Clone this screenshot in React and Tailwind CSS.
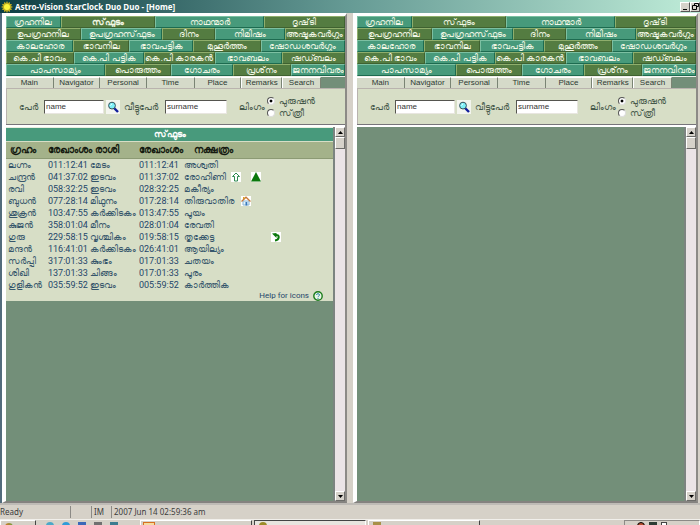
import { useState } from 'react';
import { clsx } from 'clsx';

const tabRows = [
    [['ഗ്രഹനില', 54], ['സ്‌ഫുടം', 95], ['നാഥന്മാർ', 109], ['ദൃഷ്‌ടി', 81]],
    [['ഉപഗ്രഹനില', 75], ['ഉപഗ്രഹസ്‌ഫുടം', 82], ['ദിനം', 52], ['നിമിഷം', 70], ['അഷ്ടകവർഗ്ഗം', 60]],
    [['കാലഹോര', 67], ['ഭാവനില', 56], ['ഭാവപട്ടിക', 64], ['മുഹൂർത്തം', 67], ['ഷോഡശവർഗ്ഗം', 85]],
    [['കെ.പി ഭാവം', 68], ['കെ.പി പട്ടിക', 70], ['കെ.പി കാരകൻ', 71], ['ഭാവബലം', 67], ['ഷഡ്ബലം', 63]],
    [['പാപസാമ്യം', 100], ['പൊരുത്തം', 66], ['ഗോചരം', 62], ['പ്രശ്‌നം', 57], ['ജനനവിവരം', 54]],
];

// rows start on teal or on olive and then alternate
const oliveFirst = [false, true, false, true, false];

const sections = [['Main', 48], ['Navigator', 47], ['Personal', 47], ['Time', 48], ['Place', 47], ['Remarks', 40], ['Search', 38]];

const planets = [
    { name: 'ലഗ്നം', lon: '011:12:41', rasi: 'മേടം', pos: '011:12:41', star: 'അശ്വതി' },
    { name: 'ചന്ദ്രൻ', lon: '041:37:02', rasi: 'ഇടവം', pos: '011:37:02', star: 'രോഹിണി', icons: ['up', null, 'triangle'] },
    { name: 'രവി', lon: '058:32:25', rasi: 'ഇടവം', pos: '028:32:25', star: 'മകീര്യം' },
    { name: 'ബുധൻ', lon: '077:28:14', rasi: 'മിഥുനം', pos: '017:28:14', star: 'തിരുവാതിര', icons: [null, 'house'] },
    { name: 'ശുക്രൻ', lon: '103:47:55', rasi: 'കർക്കിടകം', pos: '013:47:55', star: 'പൂയം' },
    { name: 'കുജൻ', lon: '358:01:04', rasi: 'മീനം', pos: '028:01:04', star: 'രേവതി' },
    { name: 'ഗുരു', lon: '229:58:15', rasi: 'വൃശ്ചികം', pos: '019:58:15', star: 'തൃക്കേട്ട', icons: [null, null, null, null, 'retro'] },
    { name: 'മന്ദൻ', lon: '116:41:01', rasi: 'കർക്കിടകം', pos: '026:41:01', star: 'ആയില്യം' },
    { name: 'സർപ്പി', lon: '317:01:33', rasi: 'കുംഭം', pos: '017:01:33', star: 'ചതയം' },
    { name: 'ശിഖി', lon: '137:01:33', rasi: 'ചിങ്ങം', pos: '017:01:33', star: 'പൂരം' },
    { name: 'ഗുളികൻ', lon: '035:59:52', rasi: 'ഇടവം', pos: '005:59:52', star: 'കാർത്തിക' },
];

const Sun = () => (
    <svg viewBox="0 0 12 12" className="size-3 shrink-0">
        <path d="M6 0l1 2 2-1v2l2 0-1 2 2 1-2 1 1 2H9v2L7 10l-1 2-1-2-2 1V9H1l1-2-2-1 2-1-1-2h2V1l2 1z" fill="#b8a820" />
        <circle cx="6" cy="6" r="3" fill="#fbf43c" />
    </svg>
);

const Magnifier = () => (
    <svg viewBox="0 0 12 12" className="size-3">
        <path d="M7 7l4 4" stroke="#101c9c" strokeWidth="2.4" />
        <circle cx="5" cy="4.6" r="3.4" fill="#7ff0f8" stroke="#35505c" />
        <path d="M3.4 4.4l1.6-1.6" stroke="#fff" />
    </svg>
);

const PlanetIcon = ({ kind }) => (
    <svg viewBox="0 0 10 10" className="size-[10px] bg-white">
        {kind === 'up' && <path d="M5 1L8.500 4.500H6.500V9H3.500V4.500H1.500z" fill="#fff" stroke="#2f8a50" />}
        {kind === 'triangle' && <path d="M5 0L10 9.500H0z" fill="#0b780b" />}
        {kind === 'house' && (
            <>
                <path d="M2 5h6v4H2z" fill="#e4f3fb" stroke="#8bb6d6" />
                <path d="M0.500 5.500L5 1.200l4.500 4.300" fill="none" stroke="#c87a3c" strokeWidth="1.300" />
                <path d="M2 1h1.500v2H2z" fill="#d9a026" />
                <path d="M4.500 6h1.800v3.500H4.500z" fill="#3a78b8" />
            </>
        )}
        {kind === 'retro' && (
            <>
                <path d="M1 1.500L5.500 1V6z" fill="#0b780b" />
                <path d="M4 3C9.500 2 8.500 8 4 8.500" fill="none" stroke="#0b780b" strokeWidth="2" />
            </>
        )}
    </svg>
);

const ScrollButton = ({ down }) => (
    <button
        aria-label={down ? 'Scroll down' : 'Scroll up'}
        className="flex h-[10px] w-full items-center justify-center border border-t-white border-l-white border-r-[#6b6b68] border-b-[#6b6b68] bg-[#d6d2ca]"
    >
        <svg viewBox="0 0 5 3" className="h-[3px] w-[5px]">
            <path d={down ? 'M0 0h5L2.500 3z' : 'M0 3h5L2.500 0z'} fill="#000" />
        </svg>
    </button>
);

const ScrollBar = () => (
    <div className="flex w-3 shrink-0 flex-col border-l-2 border-[#7c8480] bg-[#ebe4e6]">
        <ScrollButton />
        <div className="h-3 border border-t-white border-l-white border-r-[#6b6b68] border-b-[#6b6b68] bg-[#d6d2ca]" />
        <div className="flex-1" />
        <ScrollButton down />
    </div>
);

const TabStrip = ({ bold }) => (
    <nav className="flex flex-col">
        {tabRows.map((row, r) => (
            <div key={r} className="flex h-3">
                {row.map(([label, width], i) => (
                    <button
                        key={label}
                        style={{ flexGrow: width }}
                        className={clsx(
                            'flex basis-0 min-w-0 items-center justify-center overflow-hidden whitespace-nowrap border text-[9px] leading-[10px] text-[#f0f6e4]',
                            (i % 2 === 1) !== oliveFirst[r]
                                ? 'bg-[#547c41] border-t-[#8fae6c] border-l-[#8fae6c] border-r-[#3f6230] border-b-[#3f6230]'
                                : 'bg-[#479a7b] border-t-[#7cc0a2] border-l-[#7cc0a2] border-r-[#1d6b50] border-b-[#1d6b50]',
                            bold && r === 0 && i === 1 && 'font-bold'
                        )}
                    >
                        {label}
                    </button>
                ))}
            </div>
        ))}
    </nav>
);

const SectionTabs = () => (
    <nav className="flex h-[11px] bg-[#738f79] pr-6">
        {sections.map(([label, width], i) => (
            <button
                key={label}
                style={{ flexGrow: width }}
                className={clsx(
                    'basis-0 min-w-0 border-t border-r border-t-white border-r-[#7a8474] bg-[#d5dac9] text-center text-[8px] leading-[10px] text-[#2d3a34]',
                    i > 4 && 'border-l border-l-white'
                )}
            >
                {label}
            </button>
        ))}
    </nav>
);

const PersonForm = ({ id }) => {
    const [gender, setGender] = useState('male');

    return (
        <form className="flex h-9 items-center border-t border-l border-[#b9b3ae] bg-[#d7dec6] pl-3 text-[9px] leading-3 text-[#46594a]">
            <label htmlFor={`${id}-name`} className="w-[25px] shrink-0 whitespace-nowrap">പേർ</label>
            <input
                id={`${id}-name`}
                defaultValue="name"
                className="h-[14px] w-[60px] border border-t-[#55554f] border-l-[#55554f] border-r-[#e8e6e0] border-b-[#e8e6e0] bg-white px-px text-[8px] text-[#333]"
            />
            <button type="button" aria-label="Search" className="ml-0.5 flex size-[14px] shrink-0 items-center justify-center bg-[#f3f5ee]">
                <Magnifier />
            </button>
            <label htmlFor={`${id}-surname`} className="ml-1 w-[41px] shrink-0 whitespace-nowrap">വീട്ടുപേർ</label>
            <input
                id={`${id}-surname`}
                defaultValue="surname"
                className="h-[14px] w-[62px] border border-t-[#55554f] border-l-[#55554f] border-r-[#e8e6e0] border-b-[#e8e6e0] bg-white px-px text-[8px] text-[#333]"
            />
            <fieldset className="ml-3 flex items-center">
                <span className="w-7 whitespace-nowrap">ലിംഗം</span>
                <div className="flex flex-col">
                    {[['male', 'പുരുഷൻ'], ['female', 'സ്‌ത്രീ']].map(([value, label]) => (
                        <label key={value} className="flex h-3 items-center gap-1 whitespace-nowrap">
                            <input
                                type="radio"
                                name={`${id}-gender`}
                                checked={gender === value}
                                onChange={() => setGender(value)}
                                className="size-2 appearance-none rounded-full border border-t-[#555] border-l-[#555] border-r-[#ddd] border-b-[#ddd] bg-white checked:bg-[radial-gradient(circle,#000_30%,#fff_40%)]"
                            />
                            {label}
                        </label>
                    ))}
                </div>
            </fieldset>
        </form>
    );
};

const PlanetTable = () => (
    <div className="bg-[#d7dec6]">
        <table className="w-full table-fixed border-collapse text-left text-[9px] leading-[10px] text-[#36566b]">
            <caption className="h-[14px] border-t border-[#e8efe0] bg-[#489a7c] text-[9px] leading-3 font-bold text-white">സ്‌ഫുടം</caption>
            <colgroup>
                <col className="w-10" />
                <col className="w-[42px]" />
                <col className="w-[49px]" />
                <col className="w-[45px]" />
                <col />
            </colgroup>
            <thead>
                <tr className="h-[17px] border-t border-b border-t-[#d7dec6] border-b-[#8c9a74] bg-[#a4b28a] text-[10px] font-bold whitespace-nowrap text-[#151a10]">
                    <th className="pl-1">ഗ്രഹം</th>
                    <th colSpan={2} className="pl-0.5">രേഖാംശം രാശി</th>
                    <th className="pl-0.5">രേഖാംശം</th>
                    <th className="pl-3">നക്ഷത്രം</th>
                </tr>
            </thead>
            <tbody>
                {planets.map((planet) => (
                    <tr key={planet.name} className="h-3 whitespace-nowrap">
                        <td className="pl-0.5">{planet.name}</td>
                        <td className="pl-0.5 font-['Roboto'] text-[#24466a]">{planet.lon}</td>
                        <td className="pl-0.5">{planet.rasi}</td>
                        <td className="pl-0.5 font-['Roboto'] text-[#24466a]">{planet.pos}</td>
                        <td className="pl-0.5">
                            <div className="flex items-center">
                                <span className="w-[47px]">{planet.star}</span>
                                <span className="grid grid-cols-[repeat(5,10px)]">
                                    {planet.icons?.map((kind, i) => (kind ? <PlanetIcon key={i} kind={kind} /> : <span key={i} />))}
                                </span>
                            </div>
                        </td>
                    </tr>
                ))}
            </tbody>
        </table>
        <a href="#help" className="flex h-[10px] items-center justify-end gap-1 pr-[10px] font-['Roboto'] text-[8px] leading-[10px] text-[#24466a]">
            Help for icons
            <svg viewBox="0 0 10 10" className="size-[10px]">
                <circle cx="5" cy="5" r="4.200" fill="#e9f6e6" stroke="#1b7c1b" strokeWidth="1.400" />
                <path d="M3.500 4C3.500 2.200 6.500 2.200 6.500 4C6.500 5 5 5 5 6.200M5 7v1" fill="none" stroke="#2c86a8" />
            </svg>
        </a>
    </div>
);

const Pane = ({ id, showTable }) => (
    <section className="flex min-w-0 flex-1 flex-col border-t-3 border-r-2 border-b-2 border-l-4 border-t-white border-r-[#8c8a86] border-b-[#84827f] border-l-white bg-[#738f79]">
        <TabStrip bold={showTable} />
        <div className="h-px bg-[#f1f2ea]" />
        <SectionTabs />
        <PersonForm id={id} />
        <div className="h-[3px] border-t border-[#77757a] bg-white" />
        <div className="flex min-h-0 flex-1">
            <div className="min-w-0 flex-1">{showTable && <PlanetTable />}</div>
            <ScrollBar />
        </div>
    </section>
);

const TitleBar = () => (
    <header className="flex h-[13px] shrink-0 items-center gap-0.5 bg-linear-to-r from-[#0c3f44] via-[#669b95] to-[#bfecd8] pl-px">
        <Sun />
        <h1 className="flex-1 font-['Noto_Sans'] text-[8px] leading-3 font-bold text-white">Astro-Vision StarClock Duo Duo - [Home]</h1>
        <button aria-label="Minimize" className="flex h-[10px] w-[10px] items-end justify-center border border-t-white border-l-white border-r-[#555] border-b-[#555] bg-[#d6d2ca] pb-px">
            <span className="h-px w-1 bg-black" />
        </button>
        <button aria-label="Restore" className="-ml-0.5 flex h-[10px] w-[10px] items-center justify-center border border-t-white border-l-white border-r-[#555] border-b-[#555] bg-[#d6d2ca]">
            <svg viewBox="0 0 7 7" className="size-[7px]">
                <path d="M2.500 2V0.500h4v3H5M0.500 2.500h4v4h-4z" fill="none" stroke="#000" />
            </svg>
        </button>
    </header>
);

const StatusBar = () => (
    <footer className="flex h-4 shrink-0 items-center border-t-2 border-[#bebbb6] font-['Noto_Sans'] text-[8px] leading-3 text-[#3c3c3c]">
        <span className="w-[71px] border-r border-[#8c8a86]">Ready</span>
        <span className="h-3 w-[21px] border-r border-[#8c8a86]" />
        <span className="w-5 border-r border-[#8c8a86] pl-0.5">IM</span>
        <span className="pl-0.5">2007 Jun 14 02:59:36 am</span>
    </footer>
);

const TaskBar = () => (
    <div className="flex h-1.5 shrink-0 items-start gap-0.5 overflow-hidden border-t border-[#f1efeb]">
        <button aria-label="Start" className="flex h-4 w-9 border border-t-white border-l-white border-r-[#444] pt-0.5 pl-1">
            <span className="h-3 w-2 rounded-t bg-linear-to-r from-[#d07020] to-[#60a040]" />
        </button>
        <div className="flex w-[100px] gap-2 pt-0.5 pl-2">
            <span className="h-1 w-2 rounded-t bg-[#4ca8c8]" />
            <span className="h-1 w-2 rounded-t bg-[#2f9cd8]" />
            <span className="h-1 w-2 bg-[#3c68b8]" />
            <span className="h-1 w-2 bg-[#707070]" />
            <span className="h-1 w-2 bg-[#3c7c90]" />
        </div>
        <button aria-label="Folder window" className="h-4 w-[112px] border border-t-white border-l-white border-r-[#444] pl-0.5">
            <span className="block h-3 w-3 border border-[#d87020] bg-[#f4dca0]" />
        </button>
        <button aria-label="StarClock window" className="h-4 w-[112px] border border-t-[#444] border-l-[#444] border-r-white bg-[#e8e5df] pl-1">
            <span className="block h-3 w-2 rounded-t bg-[#9c8c28]" />
        </button>
        <button aria-label="Paint window" className="h-4 w-[112px] border border-t-white border-l-white border-r-[#444] pl-1">
            <span className="block h-3 w-2 bg-[#a89048]" />
        </button>
        <div className="ml-auto flex h-4 w-[76px] gap-1 border border-t-[#8c8a86] border-l-[#8c8a86] border-r-white pt-px pl-3">
            <span className="h-2 w-2 rounded-full border border-black bg-[#b85030]" />
            <span className="h-2 w-2 bg-[#2c3c34]" />
            <span className="h-2 w-1.5 border border-[#444] bg-white" />
        </div>
    </div>
);

const App = () => (
    <div className="flex h-screen flex-col overflow-hidden bg-[#d6d1c8] font-['Liberation_Sans','Noto_Sans',sans-serif]">
        <TitleBar />
        <main className="flex min-h-0 flex-1 gap-[6px] border-l-2 border-[#536c7c] pr-0.5">
            <Pane id="left" showTable />
            <Pane id="right" />
        </main>
        <StatusBar />
        <TaskBar />
    </div>
);

export default App;
